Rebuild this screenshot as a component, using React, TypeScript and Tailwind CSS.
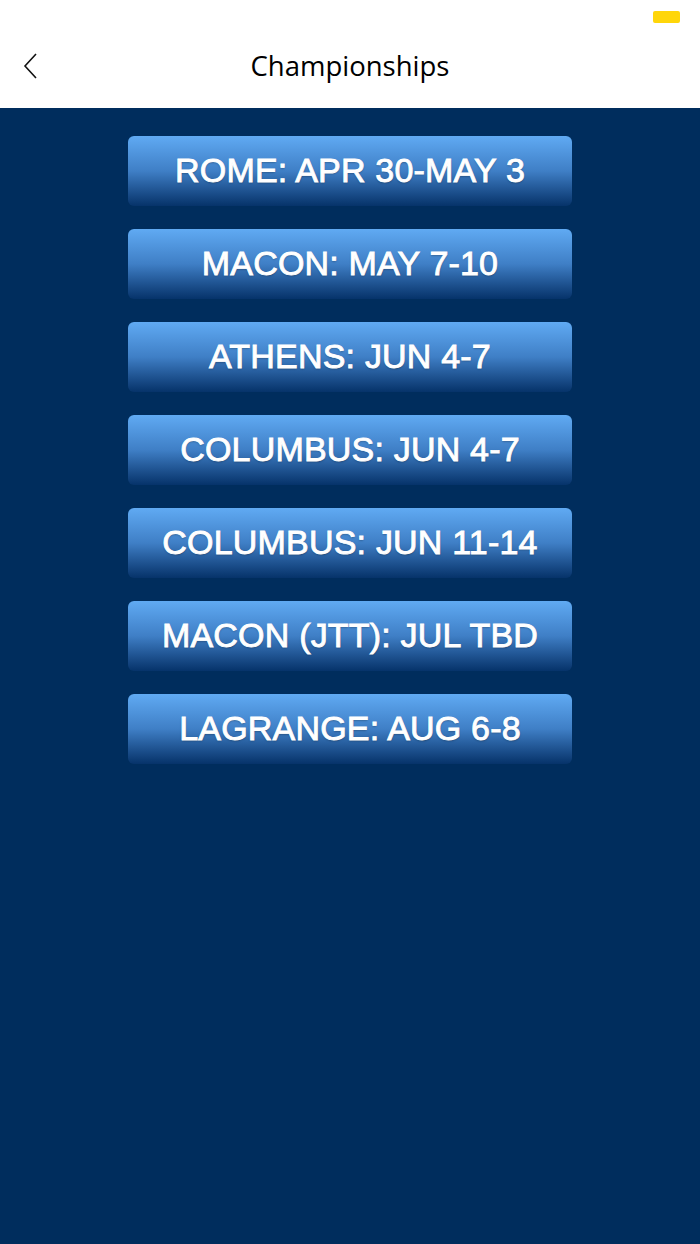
const events = [
  "ROME: APR 30-MAY 3",
  "MACON: MAY 7-10",
  "ATHENS: JUN 4-7",
  "COLUMBUS: JUN 4-7",
  "COLUMBUS: JUN 11-14",
  "MACON (JTT): JUL TBD",
  "LAGRANGE: AUG 6-8",
];

export default function App() {
  return (
    <div className="flex h-[1244px] w-[700px] flex-col bg-[#002d5d]">
      <header className="relative h-[108px] shrink-0 bg-white">
        <div className="absolute right-[20px] top-[11px] h-[12px] w-[27px] rounded-[2px] bg-[#ffd60a]" />
        <div className="flex h-full items-center pt-[24px]">
          <button className="ml-[20px] flex h-[30px] w-[20px] items-center justify-center">
            <svg width="18" height="28" viewBox="0 0 18 28" fill="none">
              <path d="M15 2 L4 14 L15 26" stroke="#111" strokeWidth="1.6" />
            </svg>
          </button>
          <h1 className="flex-1 pr-[40px] text-center font-['Open_Sans','Noto_Sans',sans-serif] text-[27.5px] text-black">
            Championships
          </h1>
        </div>
      </header>

      <main className="flex flex-col items-center gap-[23px] pt-[28px]">
        {events.map((e) => (
          <div
            key={e}
            className="flex h-[70px] w-[444px] items-center justify-center rounded-[6px] bg-gradient-to-b from-[#60aaf3] via-[#3f7fc6] to-[#06336a] pb-[2px]"
          >
            <span className="font-['Liberation_Sans',Arial,sans-serif] text-[34px] tracking-[0.2px] text-white [-webkit-text-stroke:0.9px_white] [text-shadow:0_1px_2px_rgba(0,0,0,0.35)]">
              {e}
            </span>
          </div>
        ))}
      </main>
    </div>
  );
}
